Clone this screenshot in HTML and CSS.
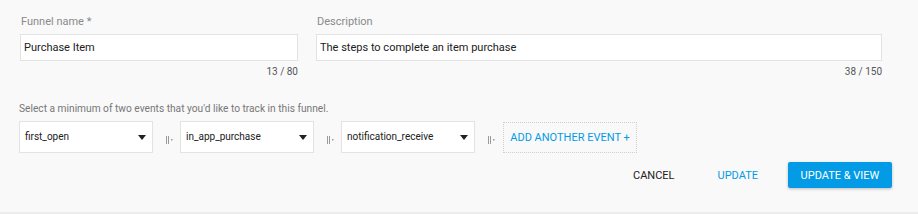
FILE: index.html
```html
<!DOCTYPE html>
<html>
	<head>
		<meta charset="UTF-8">
		<title>Edit funnel</title>
		<link rel="stylesheet" href="styles.css">
	</head>
	<body>
		<form class="funnel" action="" method="post">
			<div class="fields">
				<div class="field">
					<label for="name">Funnel name *</label>
					<input type="text" id="name" value="Purchase Item">
					<span class="count">13 / 80</span>
				</div>
				<div class="field">
					<label for="desc">Description</label>
					<input type="text" id="desc" value="The steps to complete an item purchase">
					<span class="count">38 / 150</span>
				</div>
			</div>
			<p class="help">Select a minimum of two events that you'd like to track in this funnel.</p>
			<div class="events">
				<div class="select">first_open<span class="arrow"></span></div>
				<svg class="step" width="7" height="10" viewBox="0 0 7 10"><rect x="0" y="1" width="1" height="8"/><rect x="2" y="1" width="1" height="8"/><rect x="5" y="4" width="1.5" height="1.5"/></svg>
				<div class="select">in_app_purchase<span class="arrow"></span></div>
				<svg class="step" width="7" height="10" viewBox="0 0 7 10"><rect x="0" y="1" width="1" height="8"/><rect x="2" y="1" width="1" height="8"/><rect x="5" y="4" width="1.5" height="1.5"/></svg>
				<div class="select">notification_receive<span class="arrow"></span></div>
				<svg class="step" width="7" height="10" viewBox="0 0 7 10"><rect x="0" y="1" width="1" height="8"/><rect x="2" y="1" width="1" height="8"/><rect x="5" y="4" width="1.5" height="1.5"/></svg>
				<button type="button" class="add">ADD ANOTHER EVENT +</button>
			</div>
			<div class="actions">
				<button type="button" class="flat cancel">CANCEL</button>
				<button type="button" class="flat blue">UPDATE</button>
				<button type="submit" class="raised">UPDATE &amp; VIEW</button>
			</div>
		</form>
	</body>
</html>
```

FILE: styles.css
```css
* {
	margin: 0;
	padding: 0;
	box-sizing: border-box;
}
html, body {
	background-color: #f9f9f9;
	font-family: Roboto, "Liberation Sans", sans-serif;
	color: #212121;
}
.funnel {
	height: 214px;
	padding: 15px 36px 0 20px;
	border-bottom: 2px solid #ececec;
}
.fields {
	display: grid;
	grid-template-columns: 278px 1fr;
	gap: 18px;
}
.field label {
	display: block;
	font-size: 11px;
	line-height: 13px;
	color: #8a8a8a;
	margin-left: 1px;
	margin-bottom: 6px;
}
.field input {
	display: block;
	width: 100%;
	height: 27px;
	padding: 0 3px;
	font-family: inherit;
	font-size: 11px;
	color: #212121;
	background-color: #fff;
	border: 1px solid #e3e3e3;
	outline: none;
}
.count {
	display: block;
	text-align: right;
	font-size: 10px;
	line-height: 13px;
	color: #555;
	margin-top: 4px;
}
.help {
	font-size: 10.2px;
	line-height: 13px;
	color: #777;
	margin: 24px 0 0 -1px;
}
.events {
	display: flex;
	align-items: center;
	margin: 6px 0 0 -1px;
}
.select {
	position: relative;
	flex: none;
	width: 134px;
	height: 32px;
	line-height: 30px;
	padding-left: 5px;
	font-size: 10px;
	background-color: #fff;
	border: 1px solid #e3e3e3;
}
.arrow {
	position: absolute;
	right: 6px;
	top: 13px;
	border-left: 4px solid transparent;
	border-right: 4px solid transparent;
	border-top: 5px solid #212121;
}
.step {
	flex: none;
	fill: #9a9a9a;
	margin: 6px 7px 0 13px;
}
.add {
	flex: none;
	height: 31px;
	width: 134px;
	margin-left: 1px;
	font-family: inherit;
	font-size: 11px;
	color: #039be5;
	background: transparent;
	border: 1px dotted #cfcfcf;
	cursor: pointer;
}
.actions {
	display: flex;
	justify-content: flex-end;
	align-items: center;
	margin: 9px -10px 0 0;
}
.actions button {
	font-family: inherit;
	font-size: 11px;
	height: 26px;
	border: none;
	background: transparent;
	cursor: pointer;
	color: #212121;
}
.flat.cancel {
	margin-right: 43px;
}
.flat.blue {
	color: #039be5;
	margin-right: 30px;
}
.raised {
	width: 104px;
	color: #fff !important;
	background-color: #039be5 !important;
	border-radius: 2px;
	box-shadow: 0 1px 3px rgba(0, 0, 0, 0.25);
}
```
